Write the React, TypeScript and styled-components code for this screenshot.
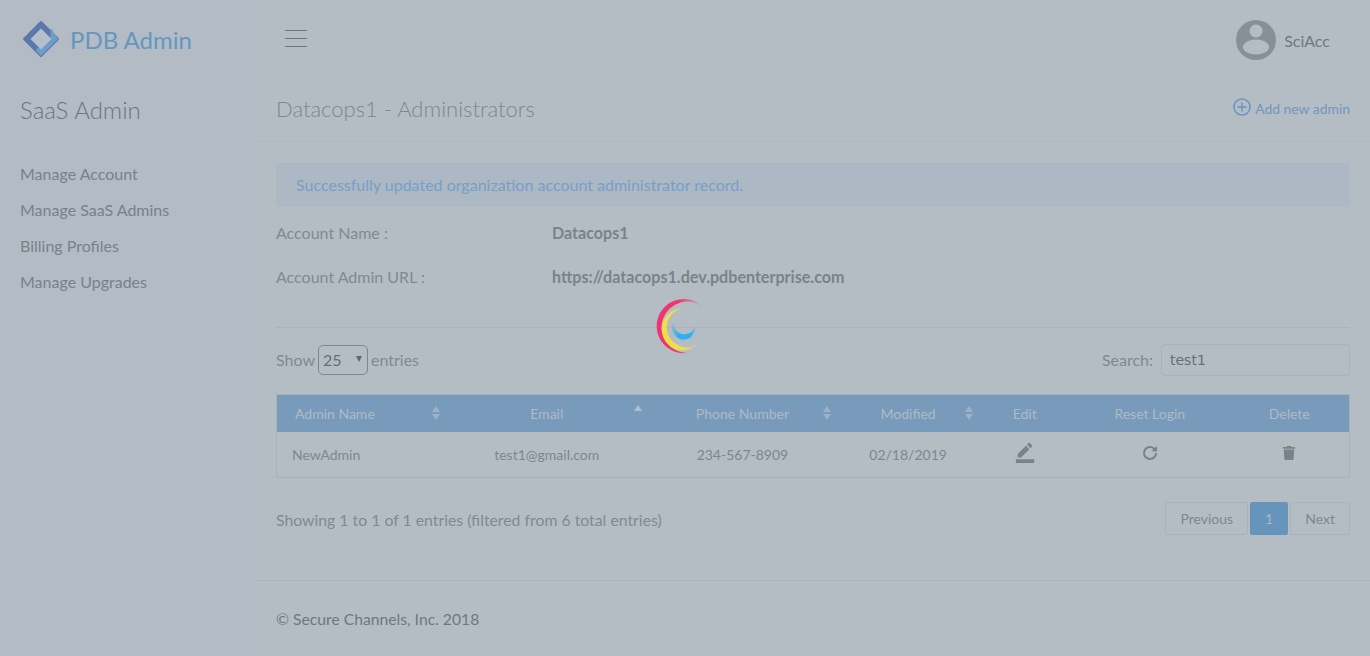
import React from 'react';
import styled, { createGlobalStyle } from 'styled-components';
import { MdBorderColor } from 'react-icons/md';
import { FaTrash } from 'react-icons/fa';

const GlobalStyle = createGlobalStyle`
  html, body {
    margin: 0;
    padding: 0;
    background: #b5bdc4;
    font-family: Lato, "Liberation Sans", sans-serif;
    color: #82898f;
  }
  * { box-sizing: border-box; }
`;

const S = {
  Page: styled.div`
    position: relative;
    display: flex;
    width: 1370px;
    height: 656px;
    overflow: hidden;
  `,
  Sidebar: styled.aside`
    flex: 0 0 256px;
    background: #b3bbc4;
  `,
  Brand: styled.div`
    display: flex;
    align-items: center;
    gap: 10px;
    height: 76px;
    padding: 2px 0 0 22px;
    font-size: 24px;
    color: #6497bf;
  `,
  SideTitle: styled.div`
    height: 66px;
    padding: 19px 0 0 20px;
    font-size: 24px;
    font-weight: 300;
    line-height: 30px;
    color: #6e757d;
  `,
  SideNav: styled.nav`
    display: flex;
    flex-direction: column;
    gap: 14px;
    padding: 21px 0 0 20px;
  `,
  SideLink: styled.a`
    font-size: 16px;
    line-height: 22px;
    color: #7a8189;
  `,
  Main: styled.main`
    flex: 1;
    display: flex;
    flex-direction: column;
    min-width: 0;
  `,
  TopBar: styled.header`
    display: flex;
    align-items: center;
    justify-content: space-between;
    height: 77px;
    padding: 4px 40px 0 29px;
    border-bottom: 1px solid #b1b9c1;
  `,
  Burger: styled.div`
    display: flex;
    flex-direction: column;
    gap: 7px;
    width: 22px;
    margin-bottom: 4px;
    & > i {
      display: block;
      height: 1px;
      background: #6e757d;
    }
  `,
  User: styled.div`
    display: flex;
    align-items: center;
    gap: 8px;
    font-size: 16px;
    color: #70777f;
  `,
  TitleBar: styled.div`
    display: flex;
    align-items: center;
    justify-content: space-between;
    height: 65px;
    padding: 0 20px 2px;
    border-bottom: 1px solid #b0b8c0;
  `,
  PageTitle: styled.h1`
    margin: 0;
    font-size: 22px;
    font-weight: 300;
    color: #7f868e;
  `,
  AddLink: styled.a`
    display: flex;
    align-items: center;
    gap: 4px;
    font-size: 13.9px;
    color: #6f97bd;
    & > svg { margin-top: -3px; }
  `,
  Content: styled.section`
    flex: 1;
    padding: 21px 20px 0;
    border-bottom: 1px solid #acb4bc;
  `,
  Alert: styled.div`
    display: flex;
    align-items: center;
    height: 44px;
    margin-bottom: 3px;
    padding: 0 20px 2px;
    border-radius: 4px;
    background: #acb8c4;
    font-size: 16px;
    color: #76a0c6;
  `,
  InfoRow: styled.div`
    display: flex;
    align-items: center;
    height: 44px;
    font-size: 16px;
  `,
  InfoLabel: styled.span`
    width: 276px;
  `,
  InfoValue: styled.strong`
    font-weight: 700;
    font-size: 16.1px;
    color: #7b828a;
  `,
  Divider: styled.hr`
    margin: 29px 0 16px;
    border: 0;
    border-top: 1px solid #aab2ba;
  `,
  Controls: styled.div`
    display: flex;
    align-items: center;
    justify-content: space-between;
    height: 32px;
    font-size: 16px;
  `,
  Length: styled.div`
    display: flex;
    align-items: center;
    gap: 3px;
  `,
  Caption: styled.span`
    margin-bottom: 2px;
  `,
  FakeSelect: styled.div`
    position: relative;
    width: 50px;
    height: 30px;
    padding: 0 4px;
    border: 1px solid #7f868e;
    border-radius: 5px;
    line-height: 28px;
    font-size: 16px;
    color: #676e76;
    &::after {
      content: '';
      position: absolute;
      top: 10px;
      right: 5px;
      border-left: 3.5px solid transparent;
      border-right: 3.5px solid transparent;
      border-top: 6px solid #5f666e;
    }
  `,
  SearchWrap: styled.label`
    display: flex;
    align-items: center;
    gap: 8px;
  `,
  SearchBox: styled.input`
    width: 189px;
    height: 32px;
    padding: 0 8px;
    border: 1px solid #a9b1b9;
    border-radius: 4px;
    background: transparent;
    font: 14px "DejaVu Sans", Lato, sans-serif;
    color: #676e76;
    outline: none;
  `,
  Table: styled.table`
    width: 100%;
    margin-top: 18px;
    border-collapse: collapse;
    table-layout: fixed;
    border: 1px solid #a9b1b9;
    font-size: 14px;
  `,
  Head: styled.th<{ $left?: boolean }>`
    position: relative;
    height: 37px;
    padding: 0 0 0 ${({ $left }) => ($left ? '18px' : '0')};
    background: #789bbb;
    color: #b0bac4;
    font-weight: 400;
    text-align: ${({ $left }) => ($left ? 'left' : 'center')};
  `,
  Sort: styled.span<{ $asc?: boolean }>`
    position: absolute;
    top: 11px;
    right: 6px;
    display: flex;
    flex-direction: column;
    gap: 2px;
    &::before, &::after {
      content: '';
      width: 0;
      border-left: 4.5px solid transparent;
      border-right: 4.5px solid transparent;
    }
    &::before {
      border-bottom: 6px solid ${({ $asc }) => ($asc ? '#b5bec8' : '#9db2c8')};
      margin-top: ${({ $asc }) => ($asc ? '-1px' : '0')};
    }
    &::after {
      border-top: 6px solid ${({ $asc }) => ($asc ? 'transparent' : '#9db2c8')};
    }
  `,
  Cell: styled.td<{ $left?: boolean }>`
    height: 46px;
    padding: 0 0 0 ${({ $left }) => ($left ? '15px' : '0')};
    color: #7f868e;
    text-align: ${({ $left }) => ($left ? 'left' : 'center')};
    & > svg { display: block; margin: -3px auto 0; fill: #7a8189; }
  `,
  EditIcon: styled(MdBorderColor)`
    && { margin-top: -5px; }
  `,
  Bottom: styled.div`
    display: flex;
    align-items: center;
    justify-content: space-between;
    margin-top: 24px;
    font-size: 15.8px;
  `,
  Summary: styled.span`
    padding-top: 2px;
  `,
  Pager: styled.div`
    display: flex;
    gap: 2px;
  `,
  PageBtn: styled.span<{ $active?: boolean }>`
    display: flex;
    align-items: center;
    height: 33px;
    padding: 0 14px;
    border: 1px solid ${({ $active }) => ($active ? '#6694bb' : '#a9b1b9')};
    border-radius: 2px;
    background: ${({ $active }) => ($active ? '#6694bb' : 'transparent')};
    color: ${({ $active }) => ($active ? '#abb8c4' : '#7f868e')};
    font-size: 14px;
  `,
  Footer: styled.footer`
    display: flex;
    align-items: center;
    height: 75px;
    padding: 0 20px;
    font-size: 15.7px;
    color: #70777f;
  `,
  Spinner: styled.svg`
    position: absolute;
    left: 653px;
    top: 297px;
    width: 60px;
    height: 60px;
    filter: blur(0.4px);
  `,
};

const columns = [
  { name: 'Admin Name', width: 169, left: true, sort: 'both' },
  { name: 'Email', width: 202, sort: 'asc' },
  { name: 'Phone Number', width: 189, sort: 'both' },
  { name: 'Modified', width: 142, sort: 'both' },
  { name: 'Edit', width: 91 },
  { name: 'Reset Login', width: 159 },
  { name: 'Delete', width: 120 },
];

function Logo() {
  return (
    <svg width="38" height="38" viewBox="0 0 38 38">
      <path d="M19 2.500 L35.500 19 L19 35.500 L2.500 19 Z" fill="#5c78ab" stroke="#5c78ab" strokeWidth="3" strokeLinejoin="round" />
      <path d="M29 9 L35.500 19 L19 35.500 L14 30 L29 19 Z" fill="#6d9ec8" stroke="#6d9ec8" strokeLinejoin="round" />
      <path d="M19 8.500 L29.500 19 L19 29.500 L8.500 19 Z" fill="#b3bfca" />
    </svg>
  );
}

function Avatar() {
  return (
    <svg width="40" height="40" viewBox="0 0 40 40">
      <circle cx="20" cy="20" r="20" fill="#888f96" />
      <circle cx="20" cy="11" r="6.500" fill="#b5bdc4" />
      <ellipse cx="20" cy="27" rx="13" ry="7.500" fill="#b5bdc4" />
    </svg>
  );
}

function PlusCircle() {
  return (
    <svg width="18" height="18" viewBox="0 0 18 18" fill="none" stroke="#6694bf" strokeWidth="1.500">
      <circle cx="9" cy="9" r="8" />
      <path d="M9 4.500v9M4.500 9h9" />
    </svg>
  );
}

function Refresh() {
  return (
    <svg width="16" height="16" viewBox="0 0 16 16">
      <path d="M8 1a7 7 0 1 0 7 7h-2a5 5 0 1 1-5-5c1.300 0 2.500.5 3.400 1.400L9.500 6.300H15V1l-2.200 2.100A7 7 0 0 0 8 1z" />
    </svg>
  );
}

function Spinner() {
  return (
    <S.Spinner viewBox="0 0 60 60">
      <defs>
        <linearGradient id="pinkFade" x1="0" y1="0" x2="1" y2="0">
          <stop offset="0.45" stopColor="#ee3570" />
          <stop offset="1" stopColor="#ee3570" stopOpacity="0.08" />
        </linearGradient>
        <linearGradient id="yellowFade" x1="0" y1="0" x2="1" y2="0">
          <stop offset="0.5" stopColor="#f0df48" />
          <stop offset="1" stopColor="#f0df48" stopOpacity="0.08" />
        </linearGradient>
        <linearGradient id="blueFade" x1="0" y1="0" x2="1" y2="0">
          <stop offset="0" stopColor="#2fb0f5" stopOpacity="0.3" />
          <stop offset="0.25" stopColor="#2fb0f5" />
          <stop offset="0.8" stopColor="#2fb0f5" />
          <stop offset="1" stopColor="#2fb0f5" stopOpacity="0.4" />
        </linearGradient>
      </defs>
      <path d="M50 10 A27.100 27.100 0 1 0 34 56 A25.700 25.700 0 1 1 50 10 Z" fill="url(#pinkFade)" />
      <path d="M28.700 11.300 A21.100 21.100 0 1 0 47 44.700 A19.700 19.700 0 1 1 28.700 11.300 Z" fill="url(#yellowFade)" />
      <path d="M20.300 26 A11.500 11.500 0 1 0 42 30 A11.200 11.200 0 0 1 20.300 26 Z" fill="url(#blueFade)" />
    </S.Spinner>
  );
}

function App() {
  return (
    <S.Page>
      <GlobalStyle />
      <S.Sidebar>
        <S.Brand>
          <Logo />
          PDB Admin
        </S.Brand>
        <S.SideTitle>SaaS Admin</S.SideTitle>
        <S.SideNav>
          <S.SideLink>Manage Account</S.SideLink>
          <S.SideLink>Manage SaaS Admins</S.SideLink>
          <S.SideLink>Billing Profiles</S.SideLink>
          <S.SideLink>Manage Upgrades</S.SideLink>
        </S.SideNav>
      </S.Sidebar>
      <S.Main>
        <S.TopBar>
          <S.Burger>
            <i />
            <i />
            <i />
          </S.Burger>
          <S.User>
            <Avatar />
            SciAcc
          </S.User>
        </S.TopBar>
        <S.TitleBar>
          <S.PageTitle>Datacops1 - Administrators</S.PageTitle>
          <S.AddLink>
            <PlusCircle />
            Add new admin
          </S.AddLink>
        </S.TitleBar>
        <S.Content>
          <S.Alert>Successfully updated organization account administrator record.</S.Alert>
          <S.InfoRow>
            <S.InfoLabel>Account Name :</S.InfoLabel>
            <S.InfoValue>Datacops1</S.InfoValue>
          </S.InfoRow>
          <S.InfoRow>
            <S.InfoLabel>Account Admin URL :</S.InfoLabel>
            <S.InfoValue>https://datacops1.dev.pdbenterprise.com</S.InfoValue>
          </S.InfoRow>
          <S.Divider />
          <S.Controls>
            <S.Length>
              <S.Caption>Show</S.Caption>
              <S.FakeSelect>25</S.FakeSelect>
              <S.Caption>entries</S.Caption>
            </S.Length>
            <S.SearchWrap>
              <S.Caption>Search:</S.Caption>
              <S.SearchBox defaultValue="test1" />
            </S.SearchWrap>
          </S.Controls>
          <S.Table>
            <colgroup>
              {columns.map((c) => (
                <col key={c.name} style={{ width: c.width }} />
              ))}
            </colgroup>
            <thead>
              <tr>
                {columns.map((c) => (
                  <S.Head key={c.name} $left={c.left}>
                    {c.name}
                    {c.sort && <S.Sort $asc={c.sort === 'asc'} />}
                  </S.Head>
                ))}
              </tr>
            </thead>
            <tbody>
              <tr>
                <S.Cell $left>NewAdmin</S.Cell>
                <S.Cell>test1@gmail.com</S.Cell>
                <S.Cell>234-567-8909</S.Cell>
                <S.Cell>02/18/2019</S.Cell>
                <S.Cell>
                  <S.EditIcon size={22} />
                </S.Cell>
                <S.Cell>
                  <Refresh />
                </S.Cell>
                <S.Cell>
                  <FaTrash size={14} />
                </S.Cell>
              </tr>
            </tbody>
          </S.Table>
          <S.Bottom>
            <S.Summary>Showing 1 to 1 of 1 entries (filtered from 6 total entries)</S.Summary>
            <S.Pager>
              <S.PageBtn>Previous</S.PageBtn>
              <S.PageBtn $active>1</S.PageBtn>
              <S.PageBtn>Next</S.PageBtn>
            </S.Pager>
          </S.Bottom>
        </S.Content>
        <S.Footer>© Secure Channels, Inc. 2018</S.Footer>
      </S.Main>
      <Spinner />
    </S.Page>
  );
}

export default App;
